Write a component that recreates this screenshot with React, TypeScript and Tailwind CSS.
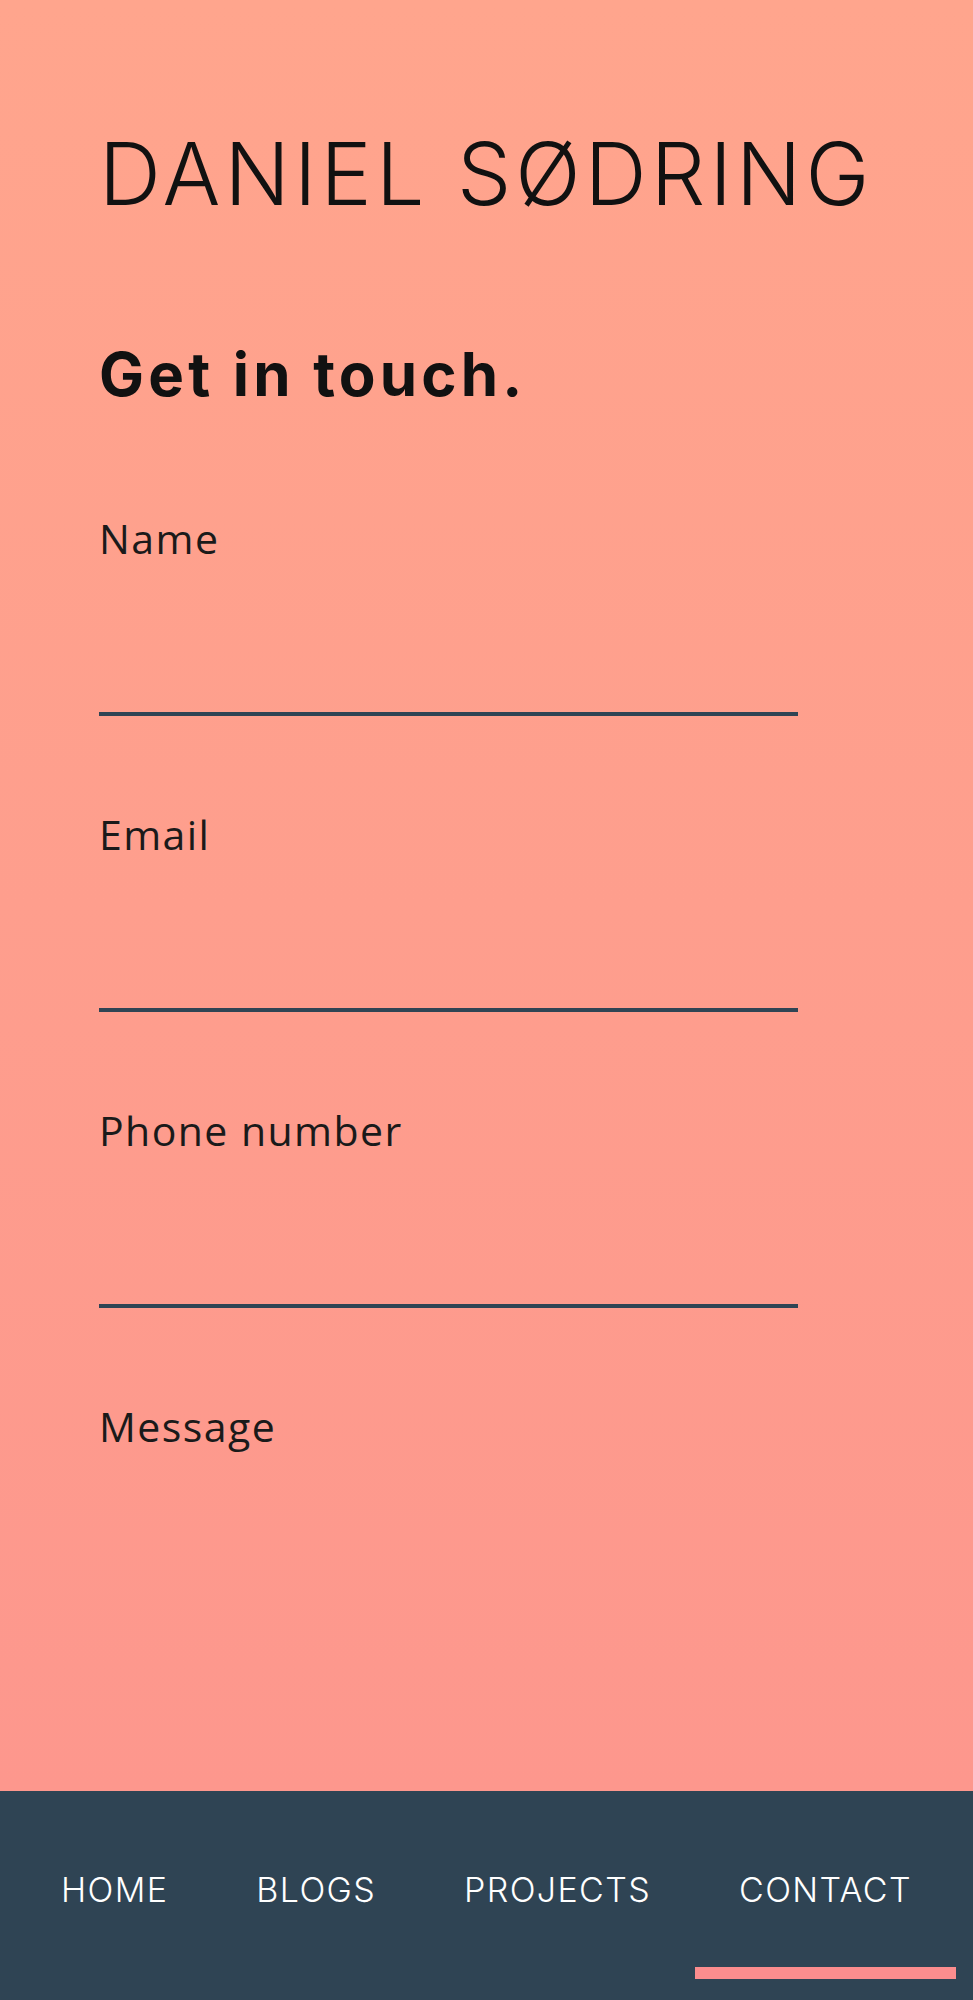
import { useState } from 'react'

const fields = [
  { id: 'name', label: 'Name', type: 'text' },
  { id: 'email', label: 'Email', type: 'email' },
  { id: 'phone', label: 'Phone number', type: 'tel' },
]

const links = ['HOME', 'BLOGS', 'PROJECTS', 'CONTACT']

export default function App() {
  const [active] = useState('CONTACT')

  return (
    <div className="min-h-screen font-['Inter',sans-serif]">
      <main className="h-[1791px] bg-gradient-to-b from-[#ffa58d] to-[#fd978d] px-[99px] pt-[131px]">
        <h1 className="whitespace-nowrap text-[86px] font-light leading-none tracking-[0.048em] text-[#111]">DANIEL SØDRING</h1>
        <h2 className="mt-[127px] text-[60px] font-bold leading-none tracking-[0.07em] text-[#111]">Get in touch.</h2>

        <form className="mt-[114px] w-[699px] font-['Open_Sans',sans-serif]">
          {fields.map((f, i) => (
            <div key={f.id} className={i > 0 ? 'mt-[98px]' : ''}>
              <label htmlFor={f.id} className="block text-[41px] leading-none tracking-[0.035em] text-[#1a1a1a]">
                {f.label}
              </label>
              <input
                id={f.id}
                type={f.type}
                className="block h-[157px] w-full border-b-4 border-[#2f4454] bg-transparent text-[36px] outline-none"
              />
            </div>
          ))}
          <div className="mt-[98px]">
            <label htmlFor="message" className="block text-[41px] leading-none tracking-[0.035em] text-[#1a1a1a]">
              Message
            </label>
            <textarea id="message" className="block h-[300px] w-full resize-none bg-transparent text-[36px] outline-none" />
          </div>
        </form>
      </main>

      <nav className="flex h-[209px] justify-center bg-[#2f4454] pt-[82px]">
        {links.map((l) => (
          <a
            key={l}
            href="#"
            className={`flex h-[106px] flex-col justify-between px-[44px] text-[34px] font-light leading-none tracking-[0.04em] text-white ${
              l === active ? 'border-b-[12px] border-[#fc8d8e]' : 'border-b-[12px] border-transparent'
            }`}
          >
            {l}
          </a>
        ))}
      </nav>
    </div>
  )
}
